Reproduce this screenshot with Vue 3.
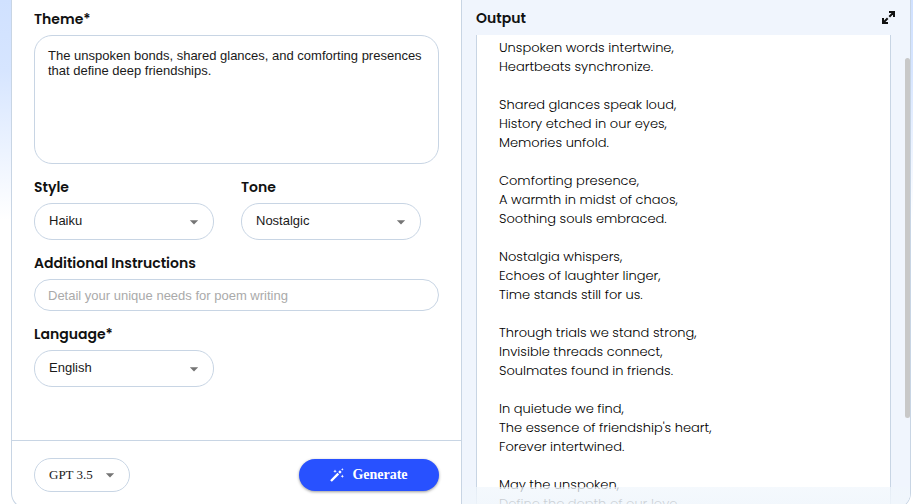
<script setup>
import { ref } from 'vue'

const theme = ref(
  'The unspoken bonds, shared glances, and comforting presences that define deep friendships.'
)
const style = ref('Haiku')
const tone = ref('Nostalgic')
const language = ref('English')
const model = ref('GPT 3.5')
const instructions = ref('')

const stanzas = [
  ['Unspoken words intertwine,', 'Heartbeats synchronize.'],
  ['Shared glances speak loud,', 'History etched in our eyes,', 'Memories unfold.'],
  ['Comforting presence,', 'A warmth in midst of chaos,', 'Soothing souls embraced.'],
  ['Nostalgia whispers,', 'Echoes of laughter linger,', 'Time stands still for us.'],
  ['Through trials we stand strong,', 'Invisible threads connect,', 'Soulmates found in friends.'],
  ['In quietude we find,', "The essence of friendship's heart,", 'Forever intertwined.'],
  ['May the unspoken,', 'Define the depth of our love,'],
]
</script>

<template>
  <main class="page">
    <div class="card">
      <form class="form" @submit.prevent>
        <div class="fields">
          <div class="field">
            <label for="theme">Theme*</label>
            <textarea id="theme" v-model="theme" class="box area"></textarea>
          </div>
          <div class="pair">
            <div class="field">
              <label for="style">Style</label>
              <div class="select">
                <select id="style" v-model="style" class="box"><option>Haiku</option></select>
                <svg class="arrow" viewBox="0 0 24 24"><path d="M7 10l5 5 5-5z" /></svg>
              </div>
            </div>
            <div class="field">
              <label for="tone">Tone</label>
              <div class="select">
                <select id="tone" v-model="tone" class="box"><option>Nostalgic</option></select>
                <svg class="arrow" viewBox="0 0 24 24"><path d="M7 10l5 5 5-5z" /></svg>
              </div>
            </div>
          </div>
          <div class="field">
            <label for="extra">Additional Instructions</label>
            <input id="extra" v-model="instructions" class="box line" type="text" placeholder="Detail your unique needs for poem writing" />
          </div>
          <div class="pair">
            <div class="field">
              <label for="language">Language*</label>
              <div class="select">
                <select id="language" v-model="language" class="box"><option>English</option></select>
                <svg class="arrow" viewBox="0 0 24 24"><path d="M7 10l5 5 5-5z" /></svg>
              </div>
            </div>
          </div>
        </div>
        <div class="actions">
          <div class="select model">
            <select v-model="model" class="box" aria-label="Model"><option>GPT 3.5</option></select>
            <svg class="arrow" viewBox="0 0 24 24"><path d="M7 10l5 5 5-5z" /></svg>
          </div>
          <button class="generate" type="submit">
            <svg class="wand" viewBox="0 0 14 14" aria-hidden="true">
              <path d="M1 13l7.300-7.300M9.100 4.900l1.700-1.700" stroke="#fff" stroke-width="2.400" />
              <path d="M5 1.500l.5 1.300 1.300.5-1.300.5L5 5.100l-.5-1.300-1.300-.5 1.300-.5zM12.300 0l.4 1 1 .4-1 .4-.4 1-.4-1-1-.4 1-.4zM12.300 6.500l.5 1.300 1.200.5-1.200.5-.5 1.300-.5-1.300-1.200-.5 1.200-.5z" fill="#fff" />
            </svg>
            Generate
          </button>
        </div>
      </form>

      <section class="output">
        <header class="head">
          <h2>Output</h2>
          <button class="expand" type="button" aria-label="Expand">
            <svg viewBox="0 0 13 13" fill="none" stroke="#111" stroke-width="2">
              <path d="M7 1h5v5M12 1L7.300 5.700M6 12H1V7M1 12l4.700-4.700" />
            </svg>
          </button>
        </header>
        <div class="scroller">
          <article class="poem">
            <p v-for="(lines, i) in stanzas" :key="i">
              <span v-for="line in lines" :key="line">{{ line }}</span>
            </p>
          </article>
          <div class="track"><div class="thumb"></div></div>
        </div>
        <div class="fade"></div>
      </section>
    </div>
  </main>
</template>

<style>
body {
  margin: 0;
}
</style>

<style scoped>
* {
  box-sizing: border-box;
}
.page {
  height: 100vh;
  overflow: hidden;
  padding: 0 2px 0 11px;
  background: linear-gradient(#d0e1ff 0, #d6e5ff 70px, #fff 220px);
  font-family: 'Liberation Sans', Arial, sans-serif;
  font-size: 13px;
  color: #1a1a1a;
}
.card {
  display: grid;
  grid-template-columns: 1fr 1fr;
  height: calc(100vh + 5px);
  border: 1px solid #c8d5e4;
  border-top: 0;
  border-radius: 0 0 16px 16px;
  background: #fff;
  overflow: hidden;
}
.form {
  display: flex;
  flex-direction: column;
}
.fields {
  display: flex;
  flex-direction: column;
  gap: 11px;
  padding: 7px 22px 0;
  flex: 1;
}
.pair {
  display: grid;
  grid-template-columns: 180px 180px;
  gap: 27px;
}
.field {
  display: flex;
  flex-direction: column;
  gap: 4px;
}
label,
h2 {
  margin: 0;
  font: 600 14px/24px Poppins, Inter, sans-serif;
  color: #111;
}
.box {
  width: 100%;
  border: 1px solid #c8d5e4;
  border-radius: 18px;
  background: #fff;
  font: inherit;
  color: inherit;
  outline: 0;
}
.area {
  height: 129px;
  padding: 12px 13px;
  line-height: 15px;
  resize: none;
}
.line {
  height: 32px;
  padding: 0 13px;
}
.line::placeholder {
  color: #aaa;
}
.select {
  position: relative;
}
.select .box {
  display: block;
  height: 37px;
  padding: 0 14px 2px;
  appearance: none;
}
.arrow {
  position: absolute;
  right: 10px;
  top: 50%;
  width: 20px;
  height: 20px;
  margin-top: -10px;
  fill: #757575;
  pointer-events: none;
}
.actions {
  display: flex;
  justify-content: space-between;
  align-items: center;
  height: 68px;
  padding: 0 22px;
  border-top: 1px solid #c8d5e4;
}
.model {
  width: 96px;
  font-family: 'Liberation Serif', serif;
}
.model .box {
  height: 34px;
  padding-bottom: 0;
}
.generate {
  display: flex;
  align-items: center;
  justify-content: center;
  gap: 8px;
  width: 140px;
  height: 32px;
  border: 0;
  border-radius: 16px;
  background: #2851ff;
  box-shadow: 0 1px 3px rgba(0, 0, 0, 0.4);
  color: #fff;
  font: 700 14px/20px 'Liberation Serif', serif;
}
.wand {
  width: 14px;
  height: 14px;
}
.output {
  position: relative;
  display: flex;
  flex-direction: column;
  min-height: 0;
  border-left: 1px solid #c8d5e4;
  background: #f0f5fd;
}
.head {
  display: flex;
  justify-content: space-between;
  align-items: center;
  height: 35px;
  padding: 0 15px 0 14px;
}
.expand {
  display: flex;
  padding: 0;
  border: 0;
  background: none;
}
.expand svg {
  width: 13px;
  height: 13px;
}
.scroller {
  display: flex;
  flex: 1;
  min-height: 0;
  padding-left: 14px;
  overflow: hidden;
}
.poem {
  flex: 1;
  display: flex;
  flex-direction: column;
  gap: 19px;
  padding: 3px 22px 0;
  border: solid #c8d5e4;
  border-width: 0 1px;
  background: #fff;
  color: #000;
  font: 300 13px/19px Poppins, Inter, sans-serif;
}
.poem p {
  margin: 0;
}
.poem span {
  display: block;
}
.track {
  width: 19px;
  padding: 23px 0 0 14px;
}
.thumb {
  height: 360px;
  border-radius: 3px;
  background: #c8c8c8;
}
.fade {
  position: absolute;
  inset: auto 0 0;
  height: 21px;
  background: linear-gradient(rgba(240, 246, 252, 0.7), rgba(240, 246, 252, 0.9));
}
</style>
